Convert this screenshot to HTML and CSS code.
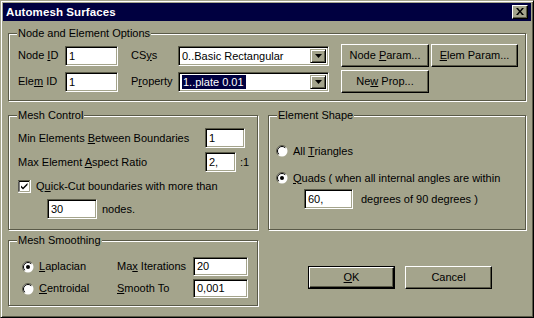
FILE: index.html
```html
<!DOCTYPE html>
<html>
<head>
<meta charset="utf-8">
<title>Automesh Surfaces</title>
<link rel="stylesheet" href="styles.css">
</head>
<body>
<div class="window">
  <div class="titlebar">
    <span class="title">Automesh Surfaces</span>
    <span class="close-btn"><svg width="8" height="7" viewBox="0 0 8 7"><path d="M0 0h2l2 2.5L6 0h2L5 3.5 8 7H6L4 4.5 2 7H0l3-3.5z" fill="#000"/></svg></span>
  </div>
  <div class="client">
    <div class="group g-node">
      <span class="legend">Node and Element Options</span>
      <div class="node-grid">
        <span class="lbl c1">Node <u>I</u>D</span>
        <div class="field c2 w-id">1</div>
        <span class="lbl c4">CS<u>y</u>s</span>
        <div class="select c5"><span class="sel-text">0..Basic Rectangular</span><span class="drop"><svg width="7" height="4" viewBox="0 0 7 4"><path d="M0 0h7L3.5 4z" fill="#000"/></svg></span></div>
        <div class="btn c7"><span>Node <u>P</u>aram...</span></div>
        <div class="btn c9"><span><u>E</u>lem Param...</span></div>
        <span class="lbl c1">Ele<u>m</u> ID</span>
        <div class="field c2 w-id">1</div>
        <span class="lbl c4">P<u>r</u>operty</span>
        <div class="select c5"><span class="sel-text"><span class="hl">1..plate 0.01</span></span><span class="drop"><svg width="7" height="4" viewBox="0 0 7 4"><path d="M0 0h7L3.5 4z" fill="#000"/></svg></span></div>
        <div class="btn c7"><span>Ne<u>w</u> Prop...</span></div>
      </div>
    </div>

    <div class="mid">
      <div class="group g-mesh">
        <span class="legend">Mesh Control</span>
        <div class="row r1"><span class="lbl mesh-lbl">Min Elements <u>B</u>etween Boundaries</span><div class="field w-min">1</div></div>
        <div class="row r2"><span class="lbl mesh-lbl">Max Element <u>A</u>spect Ratio</span><div class="field w-ratio">2,</div><span class="lbl suffix">:1</span></div>
        <div class="row r3"><span class="check"><svg width="13" height="13" viewBox="0 0 13 13"><rect x="0" y="0" width="13" height="13" fill="#fff"/><path d="M0 12.5V0.5h12.5" stroke="#5a5a48" fill="none"/><path d="M1 11.5V1.5h11" stroke="#000" fill="none"/><path d="M0.5 12.5h12V0" stroke="#fff" fill="none"/><path d="M1.5 11.5h10V1" stroke="#a4a48c" fill="none"/><path d="M3 5.5l2 2 4.5-4.5v2L5 9.5l-2-2z" fill="#000"/></svg></span><span class="lbl">Q<u>u</u>ick-Cut boundaries with more than</span></div>
        <div class="row r4"><div class="field w-nodes">30</div><span class="lbl nodes">nodes.</span></div>
      </div>
      <div class="group g-shape">
        <span class="legend">Element Shape</span>
        <div class="row s1"><span class="radio"><svg width="12" height="12" viewBox="0 0 12 12"><circle cx="6" cy="6" r="5.5" fill="#fff"/><path d="M2.1 9.9A5.5 5.5 0 0 1 9.9 2.1" stroke="#5a5a48" fill="none"/><path d="M2.8 9.2A4.5 4.5 0 0 1 9.2 2.8" stroke="#000" fill="none"/></svg></span><span class="lbl">All <u>T</u>riangles</span></div>
        <div class="row s2"><span class="radio"><svg width="12" height="12" viewBox="0 0 12 12"><circle cx="6" cy="6" r="5.5" fill="#fff"/><path d="M2.1 9.9A5.5 5.5 0 0 1 9.9 2.1" stroke="#5a5a48" fill="none"/><path d="M2.8 9.2A4.5 4.5 0 0 1 9.2 2.8" stroke="#000" fill="none"/><circle cx="6" cy="6" r="2" fill="#000"/></svg></span><span class="lbl"><u>Q</u>uads ( when all internal angles are within</span></div>
        <div class="row s3"><div class="field w-deg">60,</div><span class="lbl deg">degrees of 90 degrees )</span></div>
      </div>
    </div>

    <div class="bottom">
      <div class="group g-smooth">
        <span class="legend">Mesh Smoothing</span>
        <div class="smooth-grid">
          <div class="opt"><span class="radio"><svg width="12" height="12" viewBox="0 0 12 12"><circle cx="6" cy="6" r="5.5" fill="#fff"/><path d="M2.1 9.9A5.5 5.5 0 0 1 9.9 2.1" stroke="#5a5a48" fill="none"/><path d="M2.8 9.2A4.5 4.5 0 0 1 9.2 2.8" stroke="#000" fill="none"/><circle cx="6" cy="6" r="2" fill="#000"/></svg></span><span class="lbl"><u>L</u>aplacian</span></div>
          <span class="lbl">Ma<u>x</u> Iterations</span>
          <div class="field w-sm">20</div>
          <div class="opt"><span class="radio"><svg width="12" height="12" viewBox="0 0 12 12"><circle cx="6" cy="6" r="5.5" fill="#fff"/><path d="M2.1 9.9A5.5 5.5 0 0 1 9.9 2.1" stroke="#5a5a48" fill="none"/><path d="M2.8 9.2A4.5 4.5 0 0 1 9.2 2.8" stroke="#000" fill="none"/></svg></span><span class="lbl"><u>C</u>entroidal</span></div>
          <span class="lbl"><u>S</u>mooth To</span>
          <div class="field w-sm">0,001</div>
        </div>
      </div>
      <div class="actions">
        <div class="btn default"><span><u>O</u>K</span></div>
        <div class="btn act"><span>Cancel</span></div>
      </div>
    </div>
  </div>
</div>
</body>
</html>
```

FILE: styles.css
```css
:root {
  --face: #a4a48c;
  --shadow: #5a5a48;
  --navy: #000040;
}
html, body {
  margin: 0;
  padding: 0;
  background: var(--face);
}
body {
  font-family: "Liberation Sans", Arial, sans-serif;
  font-size: 11px;
  color: #000;
}
u { text-decoration: underline; text-underline-offset: 1px; }

.window {
  width: 534px;
  height: 318px;
  box-sizing: border-box;
  background: var(--face);
  border: 1px solid;
  border-color: var(--face) #000 #000 var(--face);
  box-shadow: inset 1px 1px #fff, inset -1px -1px var(--shadow);
  padding: 2px;
  display: flex;
  flex-direction: column;
}
.titlebar {
  height: 18px;
  background: var(--navy);
  display: flex;
  align-items: center;
  justify-content: space-between;
  padding: 0 3px 0 3px;
}
.title {
  color: #fff;
  font-weight: bold;
  font-size: 11.5px;
  letter-spacing: 0.1px;
}
.close-btn {
  width: 16px;
  height: 14px;
  box-sizing: border-box;
  background: var(--face);
  border: 1px solid;
  border-color: #fff #000 #000 #fff;
  box-shadow: inset -1px -1px var(--shadow);
  display: flex;
  align-items: center;
  justify-content: center;
  padding: 0 1px 1px 0;
}
.close-btn svg { display: block; }

.client {
  padding: 12px 0 0 5px;
}
.group {
  position: relative;
  box-sizing: border-box;
  border: 1px solid var(--shadow);
  box-shadow: inset 1px 1px #fff, 1px 1px #fff;
}
.legend {
  position: absolute;
  top: -7px;
  left: 8px;
  padding: 0 1px;
  background: var(--face);
  line-height: 13px;
}
.g-node {
  width: 518px;
  height: 68px;
}
.node-grid {
  display: grid;
  grid-template-columns: 47px 53px 13px 47px 151px 12px 88px 2px 87px;
  grid-template-rows: 23px 23px;
  row-gap: 3px;
  align-items: center;
  padding: 10px 0 0 9px;
}
.c1 { grid-column: 1; }
.c2 { grid-column: 2; }
.c4 { grid-column: 4; }
.c5 { grid-column: 5; }
.c7 { grid-column: 7; }
.c9 { grid-column: 9; }

.lbl { white-space: nowrap; line-height: 13px; }

.field {
  box-sizing: border-box;
  height: 20px;
  background: #fff;
  border: 1px solid;
  border-color: var(--shadow) #fff #fff var(--shadow);
  box-shadow: inset 1px 1px #000, inset -1px -1px var(--face);
  padding: 0 0 0 3px;
  line-height: 18px;
  white-space: nowrap;
  overflow: hidden;
}
.w-id { width: 53px; }

.select {
  box-sizing: border-box;
  height: 20px;
  background: #fff;
  border: 1px solid;
  border-color: var(--shadow) #fff #fff var(--shadow);
  box-shadow: inset 1px 1px #000, inset -1px -1px var(--face);
  display: flex;
  padding: 2px 2px 2px 2px;
}
.sel-text {
  flex: 1;
  line-height: 14px;
  padding-left: 1px;
  white-space: nowrap;
}
.hl {
  background: var(--navy);
  color: #fff;
  display: inline-block;
  padding: 0 2px 0 1px;
  line-height: 14px;
}
.drop {
  width: 16px;
  height: 14px;
  box-sizing: border-box;
  background: var(--face);
  border: 1px solid;
  border-color: var(--face) #000 #000 var(--face);
  box-shadow: inset 1px 1px #fff, inset -1px -1px var(--shadow);
  display: flex;
  align-items: center;
  justify-content: center;
}
.drop svg { display: block; }

.btn {
  box-sizing: border-box;
  height: 23px;
  background: var(--face);
  border: 1px solid;
  border-color: #fff #000 #000 #fff;
  box-shadow: inset -1px -1px var(--shadow);
  display: flex;
  align-items: center;
  justify-content: center;
  white-space: nowrap;
  padding-bottom: 1px;
}

.mid {
  display: flex;
  gap: 10px;
  margin-top: 14px;
}
.g-mesh {
  width: 250px;
  height: 115px;
  padding: 12px 0 0 9px;
}
.g-shape {
  width: 258px;
  height: 115px;
  padding: 28px 0 0 7px;
}
.row {
  display: flex;
  align-items: center;
}
.mesh-lbl { width: 187px; }
.w-min { width: 40px; }
.w-ratio { width: 31px; }
.suffix { margin-left: 4px; }
.r2 { margin-top: 4px; }
.r3 { margin-top: 6px; height: 16px; }
.check { width: 13px; height: 13px; margin-right: 5px; }
.check svg, .radio svg { display: block; }
.r4 { margin-top: 5px; padding-left: 29px; }
.w-nodes { width: 50px; }
.nodes { margin-left: 5px; }

.radio { width: 12px; height: 12px; margin-right: 5px; }
.s1 { height: 14px; }
.s2 { height: 14px; margin-top: 13px; }
.s3 { margin-top: 4px; padding-left: 28px; }
.w-deg { width: 49px; }
.deg { margin-left: 8px; }

.bottom {
  display: flex;
  gap: 10px;
  margin-top: 10px;
}
.g-smooth {
  width: 250px;
  height: 66px;
  padding: 16px 0 0 13px;
}
.smooth-grid {
  display: grid;
  grid-template-columns: 95px 76px 55px;
  grid-template-rows: 19px 19px;
  row-gap: 3px;
  align-items: center;
}
.opt { display: flex; align-items: center; }
.w-sm { width: 55px; height: 19px; line-height: 17px; }

.actions {
  display: flex;
  gap: 10px;
  padding: 26px 0 0 40px;
  align-items: flex-start;
}
.btn.act { width: 87px; }
.btn.default {
  width: 87px;
  border: 1px solid #000;
  box-shadow: none;
  padding: 0;
}
.btn.default span {
  flex: 1;
  align-self: stretch;
  display: flex;
  align-items: center;
  justify-content: center;
  border: 1px solid;
  border-color: #fff #000 #000 #fff;
  box-shadow: inset -1px -1px var(--shadow);
  padding-bottom: 1px;
}
```
